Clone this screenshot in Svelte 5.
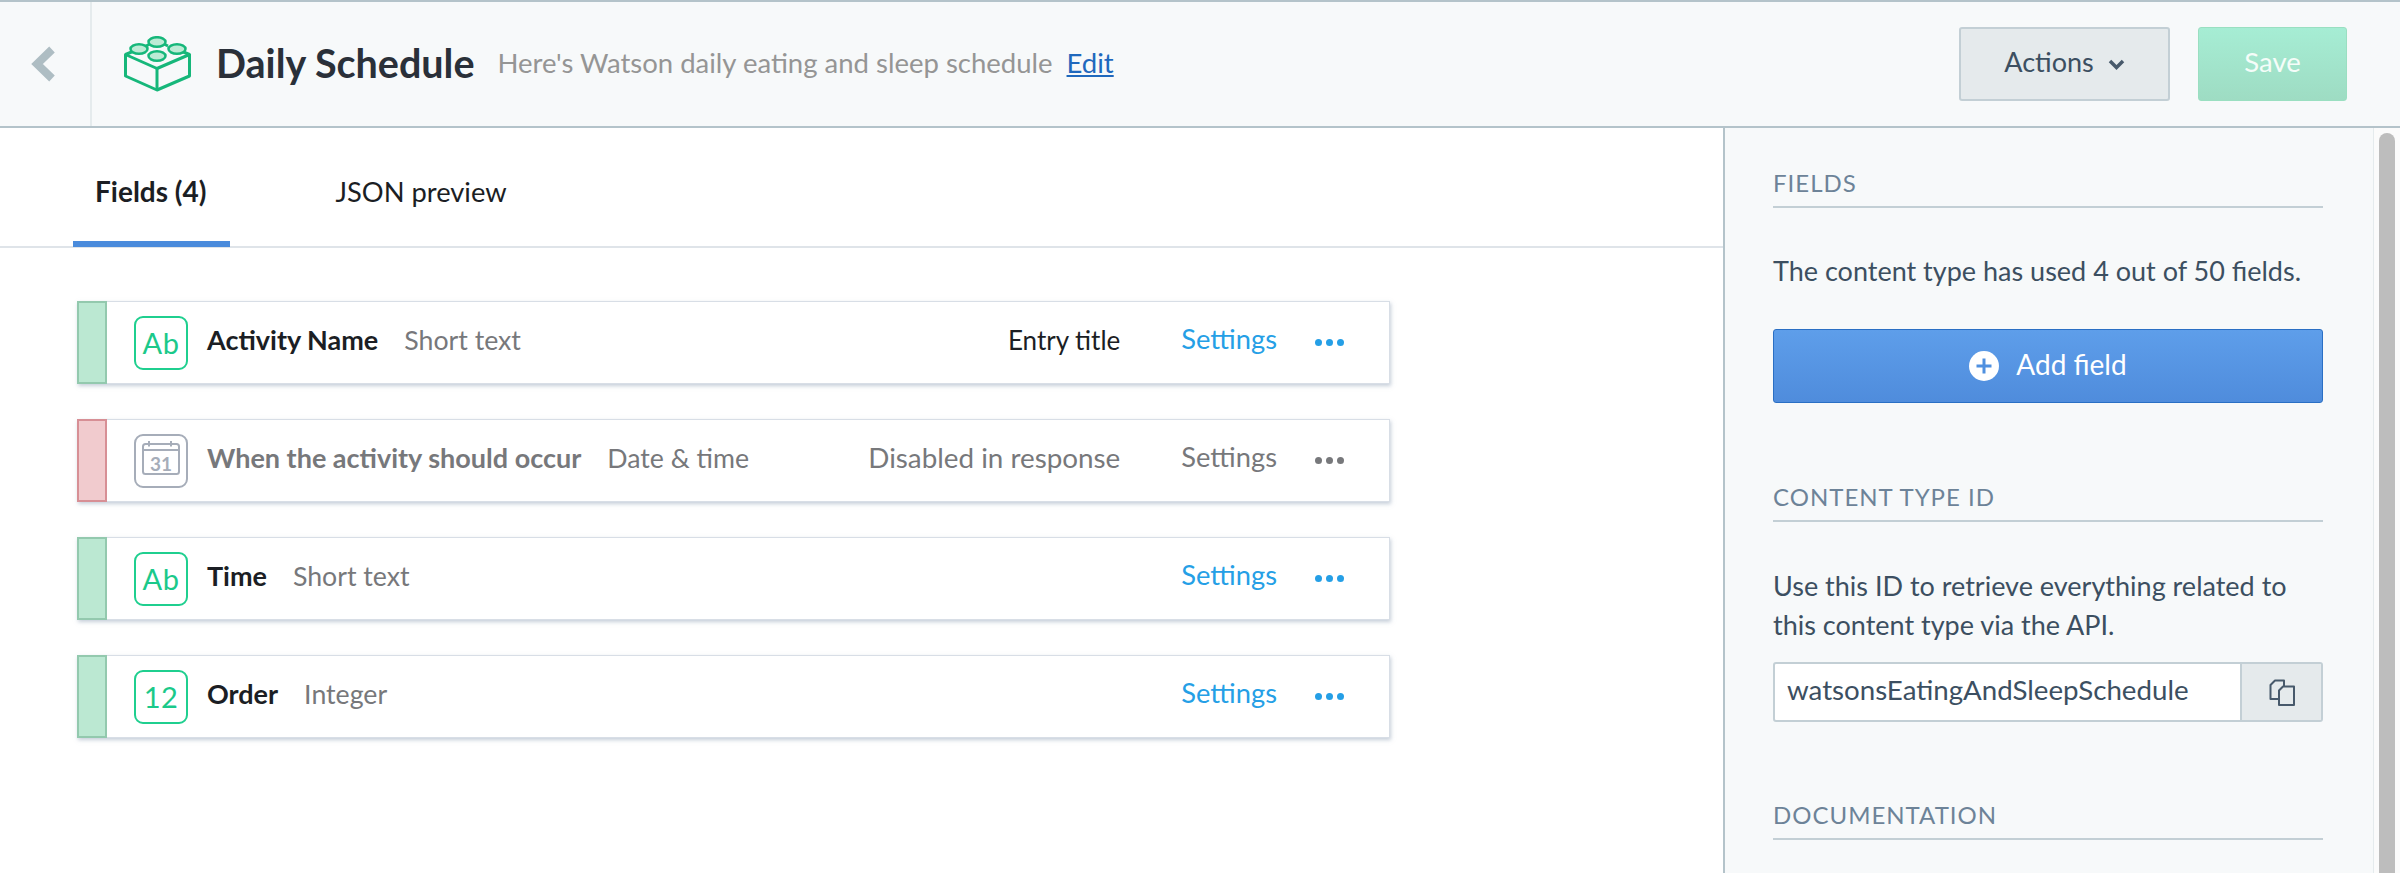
<script>
  // Content model fields shown in the list; `kind` picks the icon in the type badge.
  const fields = [
    { name: 'Activity Name', type: 'Short text', kind: 'Ab', note: 'Entry title' },
    { name: 'When the activity should occur', type: 'Date & time', kind: 'date', note: 'Disabled in response', disabled: true },
    { name: 'Time', type: 'Short text', kind: 'Ab' },
    { name: 'Order', type: 'Integer', kind: '12' }
  ]
</script>

<div class="page">
  <header class="topbar">
    <button class="back" aria-label="Back">
      <svg width="24" height="36" viewBox="0 0 24 36"><polyline points="21,3.5 6,18 21,32.500" fill="none" stroke="#aebdc3" stroke-width="8" /></svg>
    </button>
    <div class="heading">
      <svg class="brick" width="68" height="56" viewBox="124 36 68 56">
        <g fill="none" stroke="#16b77a" stroke-width="3" stroke-linejoin="round">
          <path d="M125.500 54.500 L157 68.500 L189.500 54.500 V76 L157 90 L125.500 76 Z" />
          <path d="M157 68.500 V90" />
          <path d="M125.500 54.500 L134 51 M189.500 54.500 L181 51 M146 46 L150 44 M168 46 L164 44" />
        </g>
        <g fill="#bdebd5" stroke="#16b77a" stroke-width="2.500">
          <ellipse cx="157" cy="42" rx="8.500" ry="4.800" />
          <ellipse cx="139" cy="49" rx="8.500" ry="4.800" />
          <ellipse cx="177" cy="49" rx="8.500" ry="4.800" />
          <ellipse cx="157" cy="56" rx="8.500" ry="4.800" />
        </g>
      </svg>
      <h1>Daily Schedule</h1>
      <span class="desc">Here's Watson daily eating and sleep schedule</span>
      <a class="edit" href="#edit">Edit</a>
    </div>
    <div class="actions">
      <button class="btn-actions">
        <span>Actions</span>
        <svg width="17" height="11" viewBox="0 0 17 11"><polyline points="2,2 8.500,8.500 15,2" fill="none" stroke="#47596b" stroke-width="3.500" /></svg>
      </button>
      <button class="btn-save"><span>Save</span></button>
    </div>
  </header>

  <div class="body">
    <main class="content">
      <nav class="tabs">
        <span class="tab active">Fields (4)</span>
        <span class="tab">JSON preview</span>
      </nav>
      <ul class="fields">
        {#each fields as f}
          <li class="field" class:disabled={f.disabled}>
            <span class="handle"></span>
            <span class="badge">
              {#if f.kind === 'date'}
                <svg width="38" height="34" viewBox="0 0 38 34">
                  <g fill="none" stroke="#a6adb9" stroke-width="2">
                    <rect x="1" y="3" width="36" height="30" rx="2.500" />
                    <path d="M1 9 H37 M7 0 V5.500 M29 0 V5.500" />
                  </g>
                  <text x="19" y="30" text-anchor="middle">31</text>
                </svg>
              {:else}
                {f.kind}
              {/if}
            </span>
            <span class="name">{f.name}</span>
            <span class="type">{f.type}</span>
            {#if f.note}<span class="note">{f.note}</span>{/if}
            <span class="settings">Settings</span>
            <span class="dots"><i></i><i></i><i></i></span>
          </li>
        {/each}
      </ul>
    </main>

    <aside class="sidebar">
      <section class="fields-info">
        <h2>Fields</h2>
        <p class="usage">The content type has used 4 out of 50 fields.</p>
        <button class="btn-add">
          <svg width="30" height="30" viewBox="0 0 30 30">
            <circle cx="15" cy="15" r="15" fill="#fff" />
            <path d="M15 7.500 V22.500 M7.500 15 H22.500" stroke="#4f90e0" stroke-width="3" />
          </svg>
          <span>Add field</span>
        </button>
      </section>
      <section class="type-id">
        <h2>Content type ID</h2>
        <p class="id-help">Use this ID to retrieve everything related to this content type via the API.</p>
        <div class="id-box">
          <span class="id-value">watsonsEatingAndSleepSchedule</span>
          <button class="copy" aria-label="Copy">
            <svg width="26" height="27" viewBox="0 0 26 27">
              <g fill="#e5eaec" stroke="#47596b" stroke-width="2" stroke-linejoin="round">
                <path d="M6 1.500 H15 V20 H1.500 V6 Z" />
                <path d="M14 7.500 H25 V26 H10 V11.500 Z" />
              </g>
            </svg>
          </button>
        </div>
      </section>
      <section class="docs">
        <h2>Documentation</h2>
      </section>
    </aside>
    <div class="scrollbar"><span class="thumb"></span></div>
  </div>
</div>

<style>
  :global(body) {
    margin: 0;
    background: #fff;
  }
  .page {
    height: 873px;
    overflow: hidden;
    font-family: Lato, "Liberation Sans", sans-serif;
    font-size: 28px;
    color: #2d3e50;
  }
  button {
    font-family: inherit;
    padding: 0;
    cursor: pointer;
  }

  .topbar {
    box-sizing: border-box;
    height: 128px;
    display: flex;
    align-items: stretch;
    background: #f7f9fa;
    border-top: 2px solid #b4c3ca;
    border-bottom: 2px solid #b4c3ca;
  }
  .back {
    width: 92px;
    flex: none;
    display: flex;
    align-items: center;
    padding-left: 31px;
    background: none;
    border: 0;
    border-right: 2px solid #e5ebed;
    box-sizing: border-box;
  }
  .heading {
    flex: 1;
    display: flex;
    align-items: center;
    padding-left: 32px;
  }
  .brick {
    flex: none;
  }
  h1 {
    margin: 0 23px 3px 24px;
    font-size: 39.500px;
    font-weight: 700;
    color: #2a3039;
  }
  .desc {
    margin-bottom: 3px;
    color: #959595;
    font-size: 27.500px;
  }
  .edit {
    margin: 0 0 3px 14px;
    color: #1f68bd;
    font-size: 27.500px;
  }
  .actions {
    display: flex;
    align-items: center;
    gap: 28px;
    padding-right: 53px;
  }
  .btn-actions {
    box-sizing: border-box;
    width: 211px;
    height: 74px;
    display: flex;
    align-items: center;
    justify-content: center;
    gap: 14px;
    font-size: 27px;
    color: #3c4f61;
    background: #e5eaec;
    border: 2px solid #c3cfd5;
    border-radius: 3px;
  }
  .btn-actions span,
  .btn-save span {
    display: block;
    margin-bottom: 6px;
  }
  .btn-save {
    box-sizing: border-box;
    width: 149px;
    height: 74px;
    font-size: 27.500px;
    color: #f5fdf9;
    background: linear-gradient(#a6edd4, #9edcc3);
    border: 1px solid #9adfc1;
    border-radius: 3px;
  }

  .body {
    display: flex;
    height: 745px;
  }
  .content {
    flex: 1;
    min-width: 0;
  }
  .tabs {
    box-sizing: border-box;
    height: 120px;
    display: flex;
    padding-left: 73px;
    gap: 83px;
    border-bottom: 2px solid #dfe4e9;
  }
  .tab {
    box-sizing: border-box;
    height: 119px;
    padding: 13px 24px 0 22px;
    display: flex;
    align-items: center;
    font-size: 27.300px;
    color: #1b1e24;
    border-bottom: 6px solid transparent;
  }
  .tab.active {
    font-size: 28px;
    font-weight: 700;
    border-bottom-color: #4a8bdc;
  }
  .fields {
    list-style: none;
    margin: 0;
    padding: 53px 0 0 77px;
    width: 1313px;
    display: flex;
    flex-direction: column;
    gap: 35px;
  }
  .field {
    box-sizing: border-box;
    height: 83px;
    display: flex;
    align-items: center;
    background: #fff;
    border: 1px solid #d8dee6;
    border-left: 0;
    box-shadow: 1px 2px 4px rgba(150, 165, 185, 0.55);
    font-size: 26.700px;
  }
  .handle {
    align-self: stretch;
    width: 30px;
    margin: -1px 0;
    box-sizing: border-box;
    background: #bbe8d2;
    border: 2px solid #93c9ae;
  }
  .badge {
    box-sizing: border-box;
    width: 54px;
    height: 54px;
    margin-left: 27px;
    margin-right: 19px;
    flex: none;
    display: flex;
    align-items: center;
    justify-content: center;
    border: 2px solid #1fcf8f;
    border-radius: 9px;
    color: #1bc98a;
    font-size: 29px;
    letter-spacing: 0.500px;
  }
  .badge svg {
    margin-bottom: 6px;
  }
  .badge svg text {
    font-size: 19px;
    font-weight: 700;
    fill: #a6adb9;
    letter-spacing: 0;
  }
  .name {
    margin-bottom: 6px;
    font-size: 27px;
    font-weight: 700;
    color: #1b1e24;
  }
  .type {
    margin: 0 0 6px 26px;
    color: #77787b;
  }
  .note {
    margin: 0 0 6px auto;
    font-size: 26px;
    color: #1b1e24;
  }
  .settings {
    margin: 0 0 8px 61px;
    font-size: 27.300px;
    color: #259fe6;
  }
  .type + .settings {
    margin-left: auto;
  }
  .dots {
    display: flex;
    gap: 4px;
    margin: 0 45px 0 38px;
    flex: none;
  }
  .dots i {
    width: 7px;
    height: 7px;
    border-radius: 50%;
    background: #259fe6;
  }
  .disabled .handle {
    background: #f1cbce;
    border-color: #d78f95;
  }
  .disabled .badge {
    border-color: #a6adb9;
  }
  .disabled .name,
  .disabled .note {
    color: #77787b;
  }
  .disabled .note {
    font-size: 27.800px;
  }
  .disabled .settings {
    color: #77787b;
  }
  .disabled .dots i {
    background: #77787b;
  }

  .sidebar {
    box-sizing: border-box;
    width: 651px;
    flex: none;
    padding: 40px 50px 0 48px;
    background: #f7f9fa;
    border-left: 2px solid #b4c3ca;
    border-right: 1px solid #e5ebed;
  }
  h2 {
    box-sizing: border-box;
    margin: 0;
    height: 40px;
    line-height: 30px;
    border-bottom: 2px solid #c3cfd5;
    font-size: 24px;
    font-weight: 400;
    letter-spacing: 1px;
    text-transform: uppercase;
    color: #6d8398;
  }
  p {
    margin: 0;
    font-size: 27px;
    color: #3c4f61;
    line-height: 39px;
  }
  .usage {
    margin-top: 43px;
  }
  .btn-add {
    box-sizing: border-box;
    width: 100%;
    height: 74px;
    margin-top: 39px;
    display: flex;
    align-items: center;
    justify-content: center;
    gap: 17px;
    font-size: 28px;
    color: #fff;
    background: linear-gradient(#5e9eea, #4f8cdc);
    border: 1px solid #2a6fc4;
    border-radius: 3px;
  }
  .btn-add span {
    margin-bottom: 4px;
  }
  .type-id {
    margin-top: 79px;
  }
  .id-help {
    margin-top: 44px;
  }
  .id-box {
    box-sizing: border-box;
    height: 60px;
    margin-top: 18px;
    display: flex;
    background: #fff;
    border: 2px solid #c3cfd5;
    border-radius: 3px;
  }
  .id-value {
    flex: 1;
    padding-left: 12px;
    line-height: 52px;
    font-size: 27.700px;
    color: #3c4f61;
  }
  .copy {
    width: 81px;
    display: flex;
    align-items: center;
    justify-content: center;
    background: #e5eaec;
    border: 0;
    border-left: 2px solid #c3cfd5;
  }
  .docs {
    margin-top: 78px;
  }
  .scrollbar {
    width: 26px;
    flex: none;
    box-sizing: border-box;
    padding: 5px 5px 0;
    background: #fbfbfb;
  }
  .thumb {
    display: block;
    height: 800px;
    background: #bdbdbd;
    border-radius: 8px;
  }
</style>
